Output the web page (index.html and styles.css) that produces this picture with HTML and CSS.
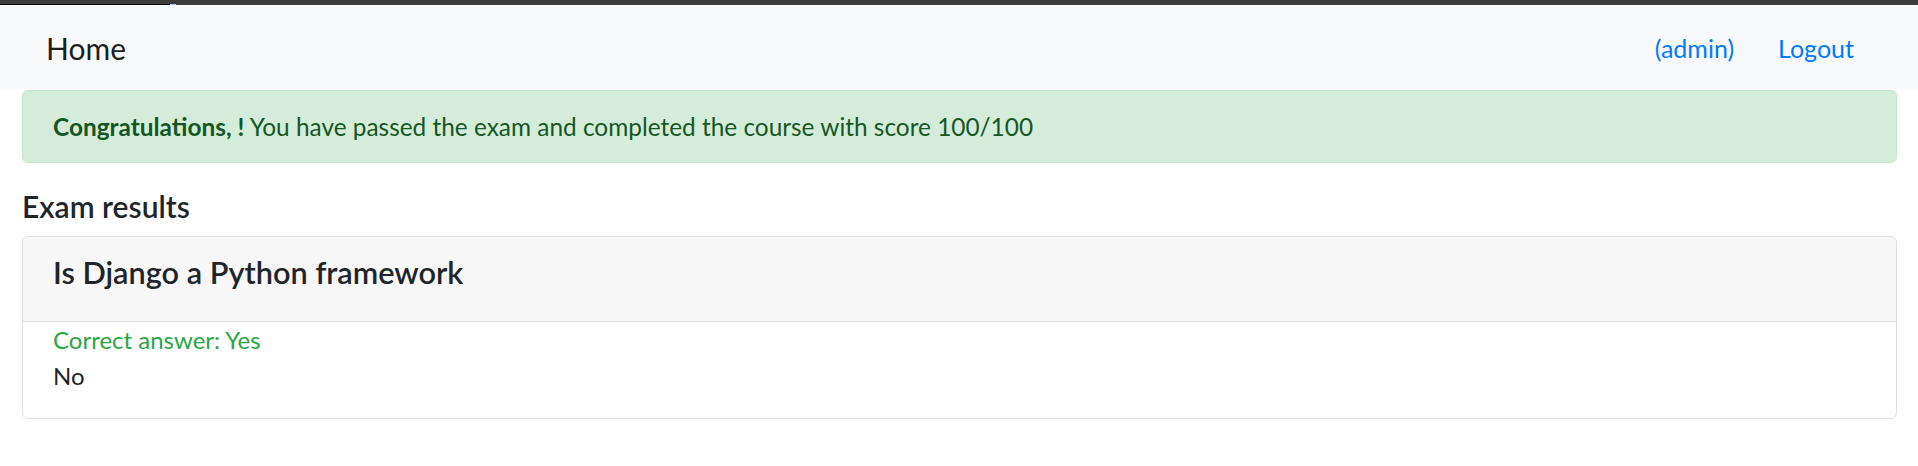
FILE: index.html
```html
<!DOCTYPE html>
<html lang="en">
<head>
<meta charset="utf-8">
<title>Exam results</title>
<link rel="stylesheet" href="styles.css">
</head>
<body>
<div class="topbar"><span class="topbar-line"></span><span class="topbar-tab"></span></div>
<nav class="navbar">
  <a class="brand" href="#">Home</a>
  <ul class="nav-links">
    <li><a href="#">(admin)</a></li>
    <li><a href="#">Logout</a></li>
  </ul>
</nav>
<main class="container">
  <div class="alert"><strong>Congratulations, !</strong> You have passed the exam and completed the course with score 100/100</div>
  <h5 class="section-title">Exam results</h5>
  <div class="card">
    <div class="card-header">
      <h5 class="question">Is Django a Python framework</h5>
    </div>
    <div class="card-body">
      <div class="correct">Correct answer: Yes</div>
      <div class="answer">No</div>
    </div>
  </div>
</main>
</body>
</html>
```

FILE: styles.css
```css
* { box-sizing: border-box; }
html, body { margin: 0; padding: 0; }
body {
  font-family: "Lato", "Noto Sans", sans-serif;
  font-size: 24px;
  line-height: 36px;
  color: #212529;
  background: #fff;
}
a { text-decoration: none; }

.topbar {
  height: 5px;
  background: #3c3c3c;
  display: flex;
  align-items: flex-end;
}
.topbar-line { width: 170px; height: 1px; background: #000; }
.topbar-tab { width: 6px; height: 1px; background: #b6c9e8; }

.navbar {
  background: #f8f9fa;
  height: 84px;
  display: flex;
  align-items: center;
  justify-content: space-between;
  padding: 2px 64px 0 46px;
}
.brand {
  color: rgba(0,0,0,.9);
  font-size: 30px;
  line-height: 45px;
}
.nav-links {
  list-style: none;
  margin: 0;
  padding: 0;
  display: flex;
  gap: 44px;
  font-size: 25px;
}
.nav-links a { color: #007bff; }

.container { padding: 1px 21px 0 22px; }

.alert {
  background: #d4edda;
  border: 1px solid #c3e6cb;
  color: #155724;
  border-radius: 6px;
  padding: 18px 30px;
  height: 73px;
  margin-bottom: 24px;
  font-size: 24.4px;
}
.alert strong { font-weight: 700; }

.section-title {
  font-size: 30px;
  font-weight: 600;
  line-height: 38px;
  margin: 0 0 11px;
}

.card {
  border: 1px solid #dfdfdf;
  border-radius: 6px;
  overflow: hidden;
}
.card-header {
  background: #f7f7f7;
  border-bottom: 1px solid #dfdfdf;
  padding: 18px 30px;
}
.question {
  margin: 0 0 12px;
  font-size: 30.7px;
  font-weight: 600;
  line-height: 36px;
}
.card-body { padding: 0 30px 24px; }
.correct { color: #28a745; }
```
